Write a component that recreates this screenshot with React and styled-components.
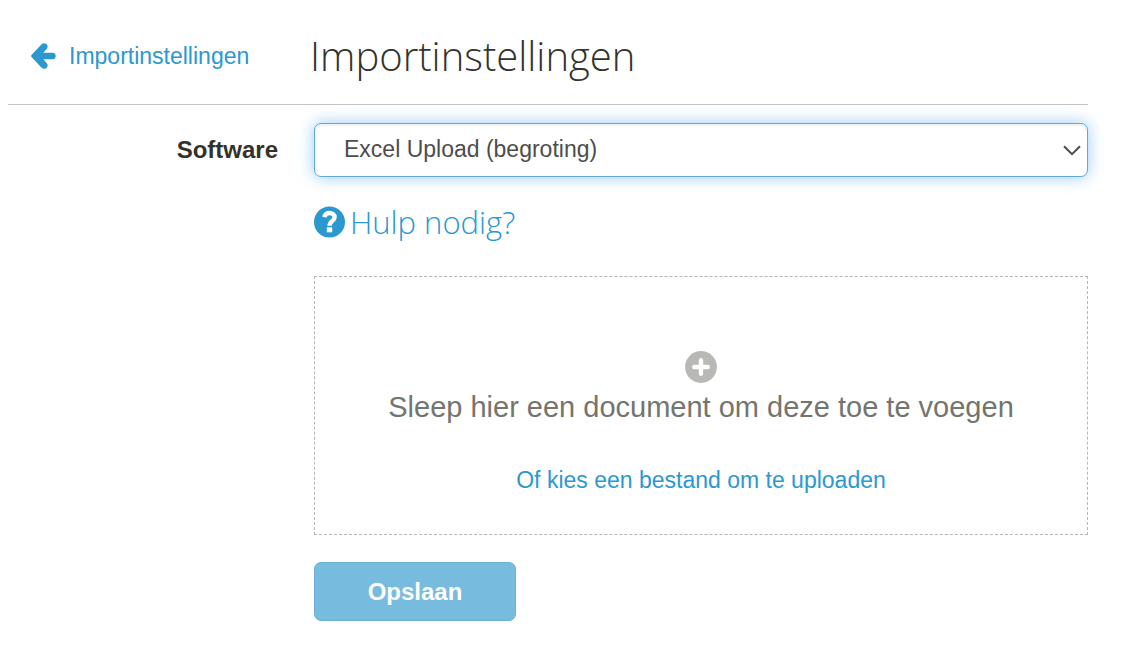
import React, { useRef, useState } from "react";
import styled, { createGlobalStyle } from "styled-components";

const ImportSettings = () => {
  const [software, setSoftware] = useState("excel-budget");
  const fileInput = useRef(null);

  const onSubmit = (e) => {
    e.preventDefault();
  };

  const onChooseFile = () => {
    fileInput.current.click();
  };

  return (
    <>
      <GlobalStyle />
      <MainContainer>
        <Header>
          <BackLink href="#importinstellingen">
            <ArrowIcon />
            Importinstellingen
          </BackLink>
          <Title>Importinstellingen</Title>
        </Header>

        <Form onSubmit={onSubmit}>
          <Label htmlFor="software">Software</Label>
          <SelectWrapper>
            <Select
              id="software"
              value={software}
              onChange={(e) => setSoftware(e.target.value)}
            >
              <option value="excel-budget">Excel Upload (begroting)</option>
            </Select>
            <ChevronIcon />
          </SelectWrapper>

          <Content>
            <HelpLink href="#hulp">
              <QuestionIcon />
              Hulp nodig?
            </HelpLink>

            <DropZone>
              <PlusIcon />
              <DropText>Sleep hier een document om deze toe te voegen</DropText>
              <ChooseButton type="button" onClick={onChooseFile}>
                Of kies een bestand om te uploaden
              </ChooseButton>
              <input
                type="file"
                ref={fileInput}
                aria-label="Bestand"
                hidden
              />
            </DropZone>

            <SaveButton type="submit">Opslaan</SaveButton>
          </Content>
        </Form>
      </MainContainer>
    </>
  );
};

const ArrowIcon = () => (
  <svg width="25" height="26" viewBox="0 0 25 26" fill="currentColor" aria-hidden="true">
    <path d="M.5 12 10.6 1.2C12-.2 14-.2 15.4 1.1C16.9 2.4 17.1 4.2 15.8 5.8L12.3 9.7H21.8C23.7 9.7 24.7 11 24.7 13S23.7 16.3 21.8 16.3H12.3L15.8 20.2C17.1 21.8 16.9 23.6 15.4 24.9C14 26.2 12 26.2 10.6 24.8L.5 14Q-.2 13 .5 12Z" />
  </svg>
);

const QuestionIcon = () => (
  <svg width="32" height="32" viewBox="0 0 32 32" aria-hidden="true">
    <circle cx="15.500" cy="16" r="15.500" fill="currentColor" />
    <path
      d="M10.200 11.200C11 8.300 12.800 7 15.500 7C18.500 7 20.600 8.700 20.600 11.200C20.600 14.900 15.500 14.900 15.500 19.800"
      fill="none"
      stroke="#fff"
      strokeWidth="4.400"
    />
    <path d="M12.800 21.300h5.400v5h-5.400z" fill="#fff" />
  </svg>
);

const PlusIcon = () => (
  <svg width="32" height="32" viewBox="0 0 32 32" aria-hidden="true">
    <circle cx="16" cy="16" r="15.900" fill="#b8b9b4" />
    <path
      d="M16 9.300v13.400M9.300 16h13.400"
      stroke="#fff"
      strokeWidth="4.400"
      strokeLinecap="round"
    />
  </svg>
);

const ChevronIcon = () => (
  <Chevron width="18" height="11" viewBox="0 0 18 11" aria-hidden="true">
    <path d="M1 1.200 9 9.200 17 1.200" fill="none" stroke="#4d4d4d" strokeWidth="2" />
  </Chevron>
);

export default ImportSettings;

const GlobalStyle = createGlobalStyle`
  * {
    box-sizing: border-box;
  }

  body {
    margin: 0;
    background: #fff;
    color: #33332b;
    font-family: "Liberation Sans", Arial, sans-serif;
    font-size: 23px;
    line-height: 32px;
  }
`;

const MainContainer = styled.main`
  padding: 8px 38px 40px 8px;
`;

const Header = styled.header`
  display: grid;
  grid-template-columns: 302px 1fr;
  align-items: center;
  height: 97px;
  border-bottom: 1px solid #c4c4c4;
`;

const BackLink = styled.a`
  display: flex;
  align-items: center;
  gap: 13px;
  padding-left: 23px;
  color: #2b98d0;
  text-decoration: none;
`;

const Title = styled.h1`
  margin: 0;
  font-family: "Open Sans", sans-serif;
  font-size: 40px;
  font-weight: 300;
  line-height: 56px;
`;

const Form = styled.form`
  display: grid;
  grid-template-columns: 270px 1fr;
  column-gap: 36px;
  align-items: center;
  padding-top: 18px;
`;

const Label = styled.label`
  font-size: 24px;
  font-weight: 700;
  text-align: right;
`;

const SelectWrapper = styled.div`
  position: relative;
`;

const Select = styled.select`
  display: block;
  width: 100%;
  height: 54px;
  padding: 0 40px 2px 29px;
  appearance: none;
  border: 1px solid #5fa9e0;
  border-radius: 7px;
  outline: none;
  background: #fff;
  box-shadow: inset 0 2px 2px rgba(0, 0, 0, 0.06),
    0 0 16px rgba(82, 168, 236, 0.6);
  color: #4d4d4d;
  font-family: inherit;
  font-size: 23px;
`;

const Chevron = styled.svg`
  position: absolute;
  top: 22px;
  right: 7px;
  pointer-events: none;
`;

const Content = styled.div`
  grid-column: 2;
  display: flex;
  flex-direction: column;
  align-items: flex-start;
`;

const HelpLink = styled.a`
  display: flex;
  align-items: center;
  gap: 4px;
  margin: 24px 0 33px;
  color: #2b98d0;
  font-family: "Open Sans", sans-serif;
  font-size: 31px;
  font-weight: 300;
  line-height: 42px;
  text-decoration: none;
`;

const DropZone = styled.div`
  display: flex;
  flex-direction: column;
  align-items: center;
  width: 100%;
  padding: 74px 16px 38px;
  border: 1px dashed #b5b5b5;
`;

const DropText = styled.p`
  margin: 4px 0 37px;
  color: #74756d;
  font-size: 29px;
  line-height: 40px;
  text-align: center;
`;

const ChooseButton = styled.button`
  padding: 0;
  border: 0;
  background: none;
  color: #2b98d0;
  font-family: inherit;
  font-size: 23px;
  line-height: 32px;
  cursor: pointer;
`;

const SaveButton = styled.button`
  width: 202px;
  height: 59px;
  margin-top: 27px;
  border: 1px solid #6cb0d1;
  border-radius: 7px;
  background: #77bbde;
  color: #fff;
  font-family: inherit;
  font-size: 24px;
  font-weight: 700;
  cursor: pointer;
`;
